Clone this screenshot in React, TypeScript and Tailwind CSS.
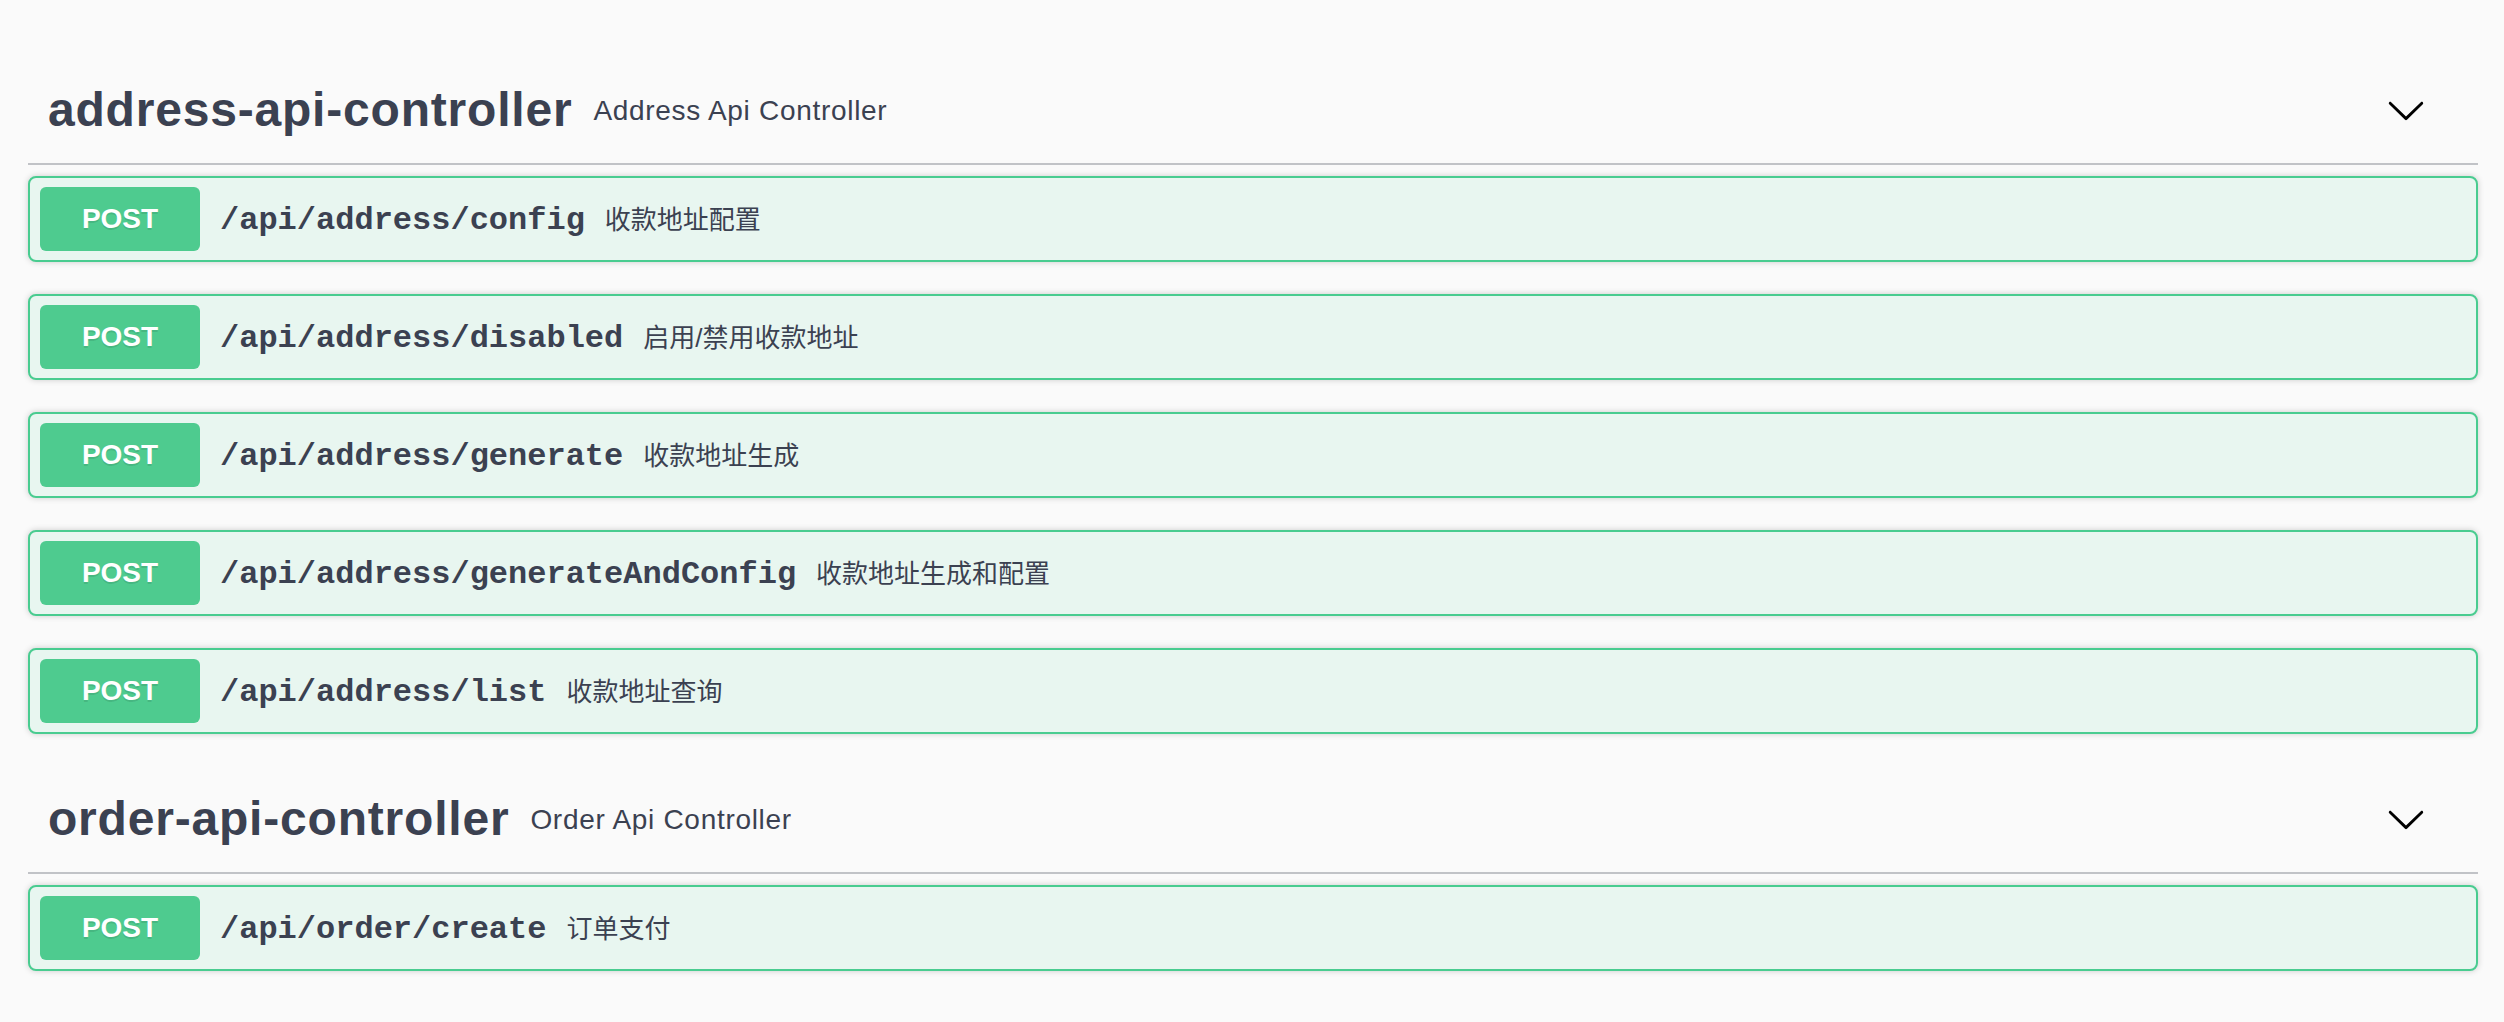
import React from "react";

type Op = { path: string; desc: string };

const sections: { name: string; desc: string; ops: Op[] }[] = [
  {
    name: "address-api-controller",
    desc: "Address Api Controller",
    ops: [
      { path: "/api/address/config", desc: "收款地址配置" },
      { path: "/api/address/disabled", desc: "启用/禁用收款地址" },
      { path: "/api/address/generate", desc: "收款地址生成" },
      { path: "/api/address/generateAndConfig", desc: "收款地址生成和配置" },
      { path: "/api/address/list", desc: "收款地址查询" },
    ],
  },
  {
    name: "order-api-controller",
    desc: "Order Api Controller",
    ops: [{ path: "/api/order/create", desc: "订单支付" }],
  },
];

function Chevron() {
  return (
    <svg width="40" height="40" viewBox="0 0 20 20" className="shrink-0">
      <path
        fill="#000"
        d="M17.418 6.109c.272-.268.709-.268.979 0s.271.701 0 .969l-7.908 7.83c-.27.268-.707.268-.979 0l-7.908-7.83c-.27-.268-.27-.701 0-.969.271-.268.709-.268.979 0L10 13.25l7.418-7.141z"
      />
    </svg>
  );
}

function OpBlock({ op }: { op: Op }) {
  return (
    <div className="flex items-center h-[86px] border-2 border-[#49cc90] rounded-[8px] bg-[#e8f6f0] shadow-[0_0_6px_rgba(0,0,0,0.19)] px-[10px] py-[9px]">
      <div
        className="w-[160px] h-[64px] shrink-0 rounded-[6px] bg-[#4ecb8f] flex items-center justify-center text-white font-bold text-[28px] [text-shadow:0_2px_0_rgba(0,0,0,0.1)]"
        style={{ fontFamily: '"Liberation Sans", Arial, sans-serif' }}
      >
        POST
      </div>
      <span
        className="px-[20px] pt-[4px] text-[32px] font-bold text-[#3b4151] leading-none"
        style={{ fontFamily: '"Liberation Mono", "Courier New", monospace' }}
      >
        {op.path}
      </span>
      <span
        className="pt-[2px] text-[26px] text-[#3b4151] leading-none"
        style={{ fontFamily: '"Liberation Sans", "Noto Sans CJK SC", sans-serif' }}
      >
        {op.desc}
      </span>
    </div>
  );
}

export default function App() {
  return (
    <div className="min-h-screen bg-[#fafafa] pt-[57px] pl-[28px] pr-[26px]">
      {sections.map((s, i) => (
        <div key={s.name} className={i > 0 ? "mt-[32px]" : ""}>
          <div className="flex items-center h-[108px] border-b-2 border-[#c1c3c7] pl-[20px] pr-[52px] mb-[11px]">
            <span
              className="text-[48px] font-bold text-[#3b4151] tracking-[0.8px] leading-none"
              style={{ fontFamily: '"Liberation Sans", Arial, sans-serif' }}
            >
              {s.name}
            </span>
            <span
              className="flex-1 pl-[21px] pt-[2px] text-[28px] text-[#3b4151] tracking-[0.7px] leading-none"
              style={{ fontFamily: '"Liberation Sans", Arial, sans-serif' }}
            >
              {s.desc}
            </span>
            <Chevron />
          </div>
          <div className="flex flex-col gap-[32px]">
            {s.ops.map((op) => (
              <OpBlock key={op.path} op={op} />
            ))}
          </div>
        </div>
      ))}
    </div>
  );
}
